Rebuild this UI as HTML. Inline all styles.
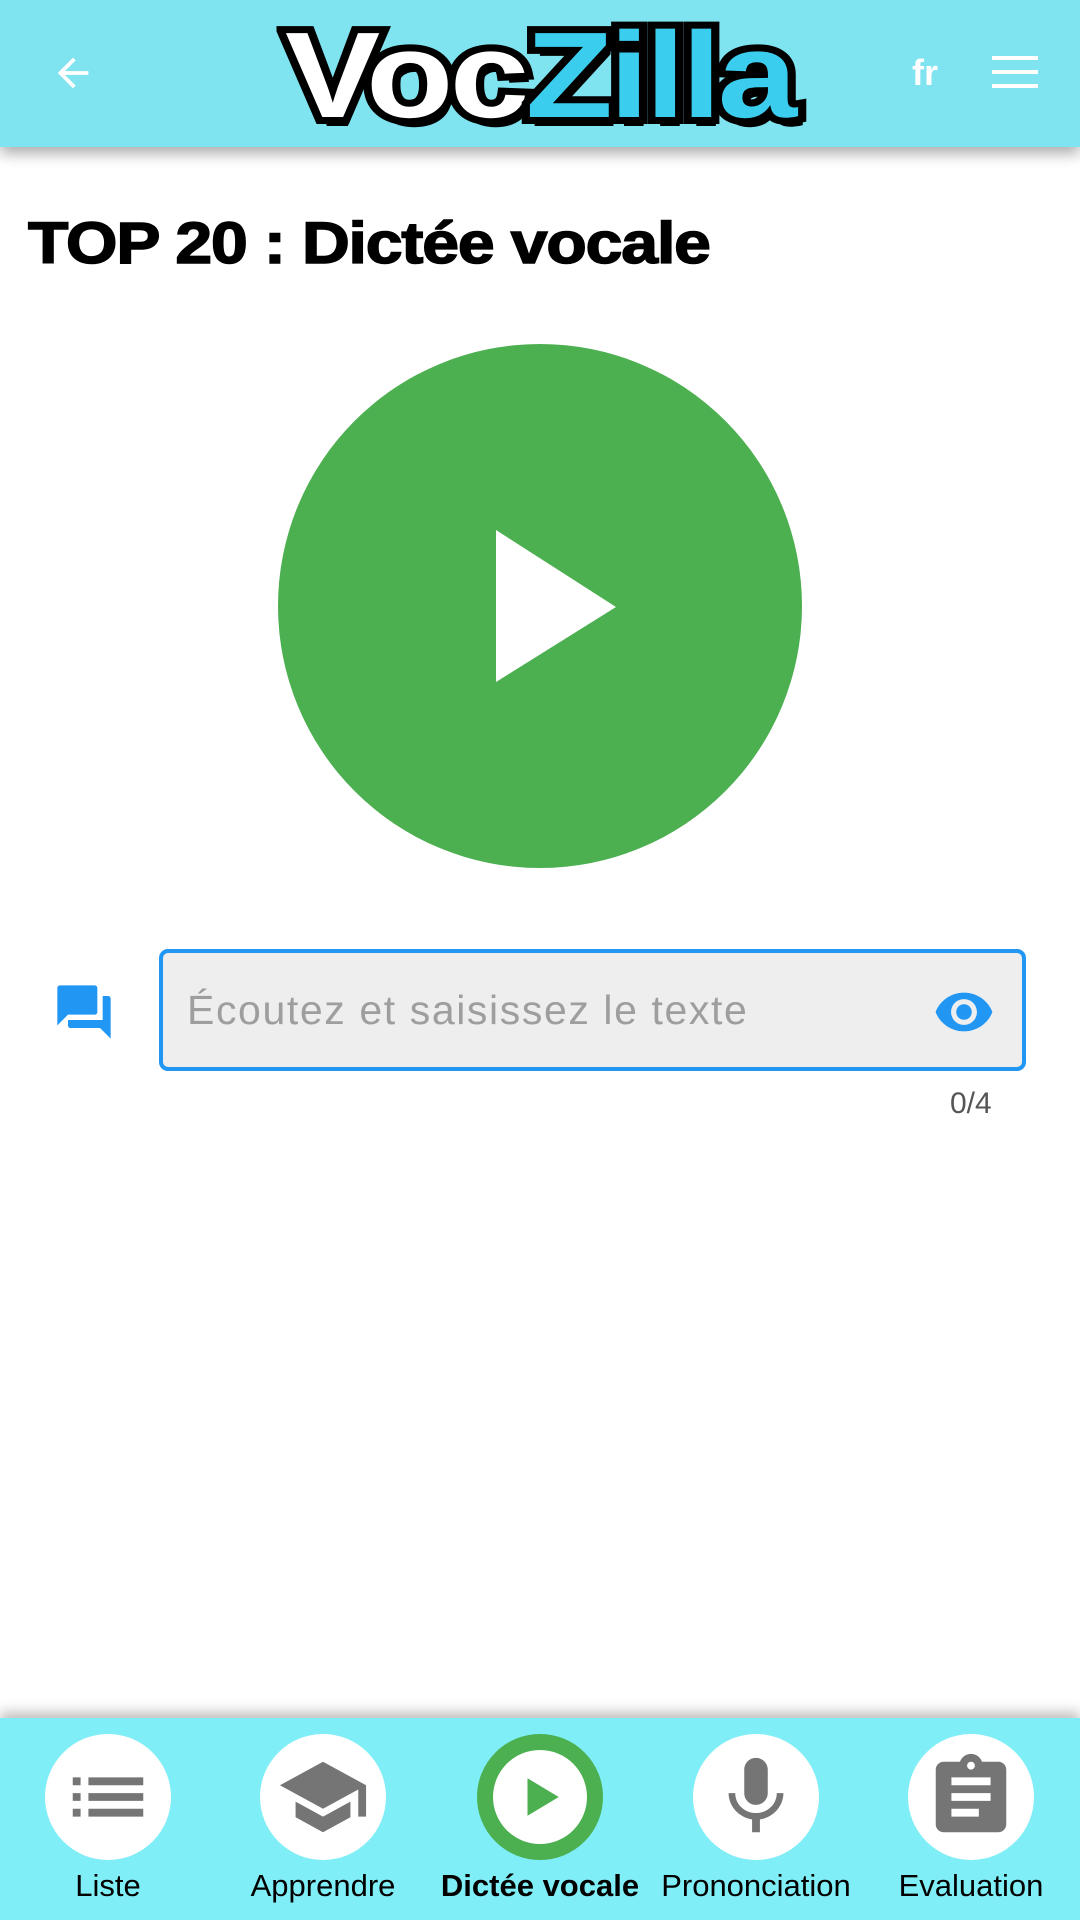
<!DOCTYPE html>
<html><head><meta charset="utf-8"><style>
*{margin:0;padding:0;box-sizing:border-box}
body{width:1080px;height:1920px;position:relative;background:#fff;font-family:"Liberation Sans",sans-serif;overflow:hidden}
.hdr{position:absolute;left:0;top:0;width:1080px;height:147px;background:#7fe3f0;box-shadow:0 6px 14px rgba(0,0,0,.35);z-index:2}
.logo{position:absolute;left:285px;top:10px;font-weight:900;font-size:122px;letter-spacing:-3px;line-height:130px;font-family:"Liberation Sans",sans-serif;
 -webkit-text-stroke:14px #000;paint-order:stroke fill;text-shadow:4px 9px 0 #000;transform:scaleX(1.17);transform-origin:left}
.logo .a{color:#fff}.logo .b{color:#3bcdee}
.fr{position:absolute;left:912px;top:52px;color:#fff;font-size:36px;font-weight:bold}
.title{position:absolute;left:28px;top:210px;font-size:58px;font-weight:900;color:#000;letter-spacing:-1px;transform:scaleX(1.14);transform-origin:left;-webkit-text-stroke:1.5px #000}
.circ{position:absolute;left:278px;top:344px;width:524px;height:524px;border-radius:50%;background:#4caf50}
.inp{position:absolute;left:159px;top:949px;width:867px;height:122px;border:4px solid #2196f3;border-radius:9px;background:#eee}
.ph{position:absolute;left:24px;top:34px;font-size:41px;color:#9e9e9e;letter-spacing:1.6px}
.cnt{position:absolute;left:950px;top:1087px;font-size:30px;color:#555}
.nav{position:absolute;left:0;top:1718px;width:1080px;height:202px;background:#80eef6;box-shadow:0 -6px 12px rgba(0,0,0,.25)}
.it{position:absolute;top:16px;width:220px;margin-left:-110px;text-align:center}
.bub{width:126px;height:126px;border-radius:50%;background:#fff;margin:0 auto;position:relative}
.lab{font-size:31px;color:#000;margin-top:8px;white-space:nowrap}
.bub svg{position:absolute;left:16px;top:16px}
</style></head><body>
<div class="hdr">
 <svg style="position:absolute;left:50px;top:50px" width="46" height="46" viewBox="0 0 24 24"><path d="M20 11H7.8l5.6-5.6L12 4l-8 8 8 8 1.4-1.4L7.8 13H20z" fill="#fff"/></svg>
 <div class="logo"><span class="a">Voc</span><span class="b">Zilla</span></div>
 <div class="fr">fr</div>
 <svg style="position:absolute;left:990px;top:52px" width="50" height="40" viewBox="0 0 50 40"><rect x="2" y="4" width="46" height="4" fill="#fff"/><rect x="2" y="18" width="46" height="4" fill="#fff"/><rect x="2" y="32" width="46" height="4" fill="#fff"/></svg>
</div>
<div class="title">TOP 20 : Dictée vocale</div>
<div class="circ"><svg style="position:absolute;left:218px;top:186px" width="122" height="154" viewBox="0 0 122 154"><path d="M0 0L120 77L0 152Z" fill="#fff"/></svg></div>
<svg style="position:absolute;left:52px;top:980px" width="64" height="64" viewBox="0 0 24 24"><path d="M21 6h-2v9H6v2c0 .55.45 1 1 1h11l4 4V7c0-.55-.45-1-1-1zm-4 6V3c0-.55-.45-1-1-1H3c-.55 0-1 .45-1 1v14l4-4h10c.55 0 1-.45 1-1z" fill="#2196f3"/></svg>
<div class="inp"><div class="ph">Écoutez et saisissez le texte</div>
<svg style="position:absolute;left:770px;top:28px" width="62" height="62" viewBox="0 0 24 24"><path d="M12 4.5C7 4.5 2.7 7.6 1 12c1.7 4.4 6 7.5 11 7.5s9.3-3.1 11-7.5c-1.7-4.4-6-7.5-11-7.5zM12 17c-2.8 0-5-2.2-5-5s2.2-5 5-5 5 2.2 5 5-2.2 5-5 5zm0-8c-1.7 0-3 1.3-3 3s1.3 3 3 3 3-1.3 3-3-1.3-3-3-3z" fill="#2196f3"/></svg></div>
<div class="cnt">0/4</div>
<div class="nav">
 <div class="it" style="left:108px"><div class="bub"><svg width="94" height="94" viewBox="0 0 24 24"><path d="M3 13h2v-2H3v2zm0 4h2v-2H3v2zm0-8h2V7H3v2zm4 4h14v-2H7v2zm0 4h14v-2H7v2zM7 7v2h14V7H7z" fill="#757575"/></svg></div><div class="lab">Liste</div></div>
 <div class="it" style="left:323px"><div class="bub"><svg width="94" height="94" viewBox="0 0 24 24"><path d="M5 13.18v4L12 21l7-3.82v-4L12 17l-7-3.82zM12 3L1 9l11 6 9-4.910V17h2V9L12 3z" fill="#757575"/></svg></div><div class="lab">Apprendre</div></div>
 <div class="it" style="left:540px"><div class="bub" style="border:16px solid #4caf50"><svg style="left:22px;top:22px" width="50" height="50" viewBox="0 0 24 24"><path d="M6 3l15 9-15 9z" fill="#4caf50"/></svg></div><div class="lab" style="font-weight:bold">Dictée vocale</div></div>
 <div class="it" style="left:756px"><div class="bub"><svg width="94" height="94" viewBox="0 0 24 24"><path d="M12 14c1.66 0 3-1.34 3-3V5c0-1.66-1.34-3-3-3S9 3.34 9 5v6c0 1.66 1.34 3 3 3zm5.3-3c0 3-2.54 5.1-5.3 5.1S6.7 14 6.7 11H5c0 3.41 2.72 6.23 6 6.72V21h2v-3.28c3.28-.48 6-3.3 6-6.72h-1.7z" fill="#757575"/></svg></div><div class="lab">Prononciation</div></div>
 <div class="it" style="left:971px"><div class="bub"><svg width="94" height="94" viewBox="0 0 24 24"><path d="M19 3h-4.18C14.4 1.84 13.3 1 12 1s-2.4.84-2.82 2H5c-1.1 0-2 .9-2 2v14c0 1.1.9 2 2 2h14c1.1 0 2-.9 2-2V5c0-1.1-.9-2-2-2zm-7 0c.55 0 1 .45 1 1s-.45 1-1 1-1-.45-1-1 .45-1 1-1zm2 14H7v-2h7v2zm3-4H7v-2h10v2zm0-4H7V7h10v2z" fill="#757575"/></svg></div><div class="lab">Evaluation</div></div>
</div>
</body></html>
